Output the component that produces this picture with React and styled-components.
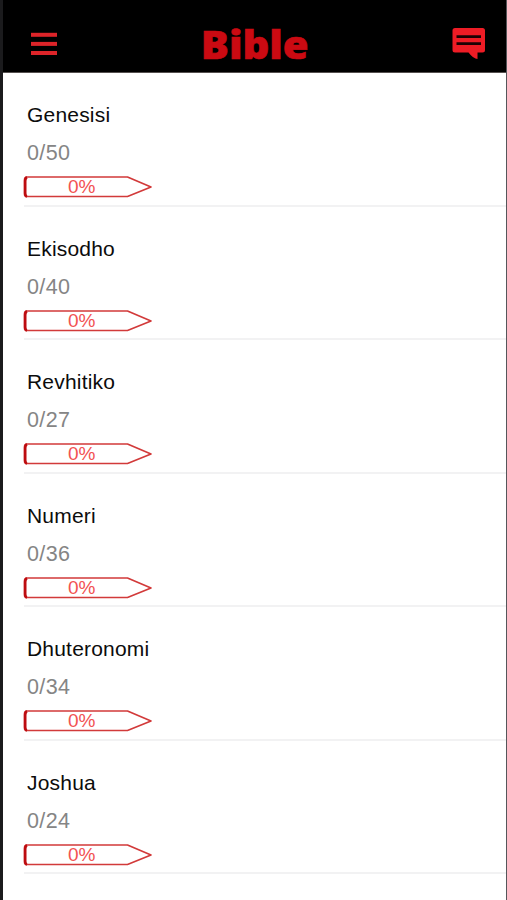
import styled, { createGlobalStyle } from 'styled-components';

const books = [
	{ name: 'Genesisi', read: 0, chapters: 50 },
	{ name: 'Ekisodho', read: 0, chapters: 40 },
	{ name: 'Revhitiko', read: 0, chapters: 27 },
	{ name: 'Numeri', read: 0, chapters: 36 },
	{ name: 'Dhuteronomi', read: 0, chapters: 34 },
	{ name: 'Joshua', read: 0, chapters: 24 },
];

const MenuIcon = () => (
	<svg width='28' height='24' viewBox='0 0 28 24' fill='#dd2429'>
		<rect x='1' y='0.8' width='26' height='4' />
		<rect x='1' y='9.9' width='26' height='4' />
		<rect x='1' y='19' width='26' height='4' />
	</svg>
);

const CommentIcon = () => (
	<svg width='34' height='34' viewBox='0 0 34 34'>
		<path
			fill='#ee1c25'
			d='M3 1H30.5Q33 1 33 3.5V23Q33 25.5 30.5 25.5H25.5V32Q21.5 32 16.5 25.5H3Q.5 25.5 .5 23V3.5Q.5 1 3 1Z'
		/>
		<path stroke='#1c0204' strokeWidth='2.6' d='M4.5 9.6H29M4.5 16.6H29' />
	</svg>
);

const ProgressArrow = ({ percent }) => (
	<Progress>
		<svg width='130' height='22' viewBox='0 0 130 22' fill='none'>
			<path
				stroke='#d23a3a'
				strokeWidth='1.7'
				strokeLinejoin='round'
				d='M4 1H104.5L128 11L104.5 20.5H4Q1.5 20.5 1.5 18V4Q1.5 1 4 1Z'
			/>
			<path stroke='#bd0c10' strokeWidth='2.6' d='M4 1.2Q2.2 2 2.2 5V17Q2.2 20 4 20.4' />
		</svg>
		<Percent>{percent}%</Percent>
	</Progress>
);

const BookRow = ({ data }) => {
	const percent = Math.round((data.read / data.chapters) * 100);
	return (
		<Row>
			<BookName>{data.name}</BookName>
			<Count>
				{data.read}/{data.chapters}
			</Count>
			<ProgressArrow percent={percent} />
		</Row>
	);
};

const App = () => (
	<>
		<GlobalStyle />
		<Screen>
			<Header>
				<IconButton aria-label='Menu'>
					<MenuIcon />
				</IconButton>
				<Title>Bible</Title>
				<IconButton aria-label='Comments'>
					<CommentIcon />
				</IconButton>
			</Header>
			<List>
				{books.map((book) => (
					<BookRow key={book.name} data={book} />
				))}
			</List>
		</Screen>
	</>
);

export default App;

const GlobalStyle = createGlobalStyle`
	* {
		box-sizing: border-box;
	}
	body {
		margin: 0;
		background: #fff;
		font-family: 'Liberation Sans', Arial, sans-serif;
	}
`;

const Screen = styled.div`
	height: 900px;
	overflow: hidden;
	border-left: 3px solid #1b1b1d;
	border-right: 1px solid #55565a;
	background: #fff;
`;

const Header = styled.header`
	display: flex;
	justify-content: space-between;
	height: 73px;
	padding: 0 20px 0 27px;
	background: #000;
	border-bottom: 1px solid #55504f;
`;

const IconButton = styled.button`
	display: flex;
	align-items: center;
	width: 34px;
	height: 72px;
	padding: 16px 0 0;
	border: none;
	background: none;
	cursor: pointer;
`;

const Title = styled.h1`
	margin: 0 7px 0 0;
	padding-top: 17px;
	color: #cb0a12;
	font: 800 38.5px/54px 'Open Sans', sans-serif;
	-webkit-text-stroke: 0.6px #cb0a12;
	transform: scaleX(1.085);
`;

const List = styled.ul`
	margin: 0;
	padding: 0 0 0 21px;
	list-style: none;
`;

const Row = styled.li`
	height: 133.5px;
	padding-top: 30px;
	border-bottom: 2px solid #f2f2f3;
`;

const BookName = styled.div`
	padding-left: 3px;
	color: #0c0c0c;
	font-size: 21px;
	line-height: 24px;
	letter-spacing: 0.2px;
`;

const Count = styled.div`
	margin-top: 14px;
	padding-left: 3px;
	color: #858585;
	font-size: 21.5px;
	line-height: 24px;
	letter-spacing: 0.4px;
`;

const Progress = styled.div`
	display: grid;
	width: 130px;
	height: 22px;
	margin: 11px 0 0 -1px;
	> * {
		grid-area: 1 / 1;
	}
`;

const Percent = styled.span`
	padding-left: 45px;
	color: #f25252;
	font-size: 19px;
	line-height: 22px;
`;
